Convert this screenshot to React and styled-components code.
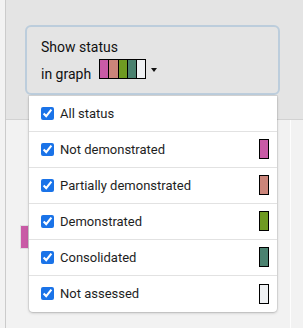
import styled, { createGlobalStyle } from "styled-components";

const GlobalStyle = createGlobalStyle`
  html, body {
    margin: 0;
    padding: 0;
    background: #f2f2f2;
    font-family: Roboto, "Liberation Sans", Arial, sans-serif;
  }
`;

const statuses = [
  { label: "Not demonstrated", color: "#c95ba6" },
  { label: "Partially demonstrated", color: "#cb857a" },
  { label: "Demonstrated", color: "#6f9b22" },
  { label: "Consolidated", color: "#4b8270" },
  { label: "Not assessed", color: "#eff1f3" },
];

export default function App() {
  return (
    <>
      <GlobalStyle />
      <Shell>
        <Header>
          <FilterWrap>
            <FilterButton>
              <Title>Show status</Title>
              <GraphLine>
                <GraphText>in graph</GraphText>
                <Strip>
                  {statuses.map((s) => (
                    <StripCell key={s.label} color={s.color} />
                  ))}
                </Strip>
                <Caret />
              </GraphLine>
            </FilterButton>
            <Menu>
              <Row>
                <Check type="checkbox" defaultChecked />
                <Label>All status</Label>
              </Row>
              {statuses.map((s) => (
                <Row key={s.label}>
                  <Check type="checkbox" defaultChecked />
                  <Label>{s.label}</Label>
                  <Swatch color={s.color} />
                </Row>
              ))}
            </Menu>
          </FilterWrap>
        </Header>
        <Body>
          <Main>
            <Bar />
          </Main>
        </Body>
      </Shell>
    </>
  );
}

const Shell = styled.div`
  margin-left: 5px;
  border-left: 1px solid #cbcbcb;
  min-height: 328px;
  display: flex;
  flex-direction: column;
`;

const Header = styled.div`
  height: 120px;
  background: #e4e4e4;
  border-bottom: 1px solid #d2d2d2;
  padding: 25px 0 0 19px;
  box-sizing: border-box;
`;

const FilterWrap = styled.div`
  position: relative;
  width: 255px;
  z-index: 2;
`;

const FilterButton = styled.div`
  height: 70px;
  box-sizing: border-box;
  border: 2px solid #bccddc;
  border-radius: 6px;
  padding: 11px 0 0 14px;
  display: flex;
  flex-direction: column;
  font-size: 14px;
  color: #111;
`;

const Title = styled.span`
  line-height: 18px;
`;

const GraphLine = styled.div`
  display: flex;
  align-items: flex-end;
  margin-top: 3px;
  height: 20px;
`;

const GraphText = styled.span`
  line-height: 14px;
  margin-bottom: -2px;
  margin-right: 8px;
`;

const Strip = styled.div`
  display: flex;
  align-self: stretch;
  border: 1.5px solid #000;
  box-sizing: border-box;
`;

const StripCell = styled.div`
  width: 8.2px;
  background: ${(p) => p.color};
  & + & {
    border-left: 1.5px solid #000;
  }
`;

const Caret = styled.div`
  align-self: center;
  margin-left: 5px;
  margin-top: 1px;
  width: 0;
  height: 0;
  border-left: 3.5px solid transparent;
  border-right: 3.5px solid transparent;
  border-top: 4px solid #111;
`;

const Menu = styled.div`
  position: absolute;
  top: 100%;
  left: 4px;
  right: 3px;
  margin-top: 0.5px;
  background: #fff;
  border-radius: 0 0 4px 4px;
  box-shadow: 0 1px 3px rgba(0, 0, 0, 0.22), 0 0 0 1px rgba(0, 0, 0, 0.06);
`;

const Row = styled.label`
  height: 36px;
  box-sizing: border-box;
  display: flex;
  align-items: center;
  padding: 0 8px 0 12px;
  border-bottom: 1px solid #e2e2e2;
  &:last-child {
    border-bottom: none;
  }
`;

const Check = styled.input`
  margin: 0;
  width: 13px;
  height: 13px;
  accent-color: #1a73e8;
`;

const Label = styled.span`
  flex: 1;
  margin-left: 6px;
  font-size: 13px;
  color: #1e1e1e;
`;

const Swatch = styled.div`
  width: 8px;
  height: 18px;
  border: 1px solid #000;
  background: ${(p) => p.color};
`;

const Body = styled.div`
  flex: 1;
  display: flex;
`;

const Main = styled.div`
  width: 285px;
  border-right: 1px solid #fdfdfd;
  padding: 105px 0 0 14px;
  box-sizing: border-box;
`;

const Bar = styled.div`
  width: 7px;
  height: 22px;
  background: #c95ba6;
  border: 1px solid #e0dde0;
`;
